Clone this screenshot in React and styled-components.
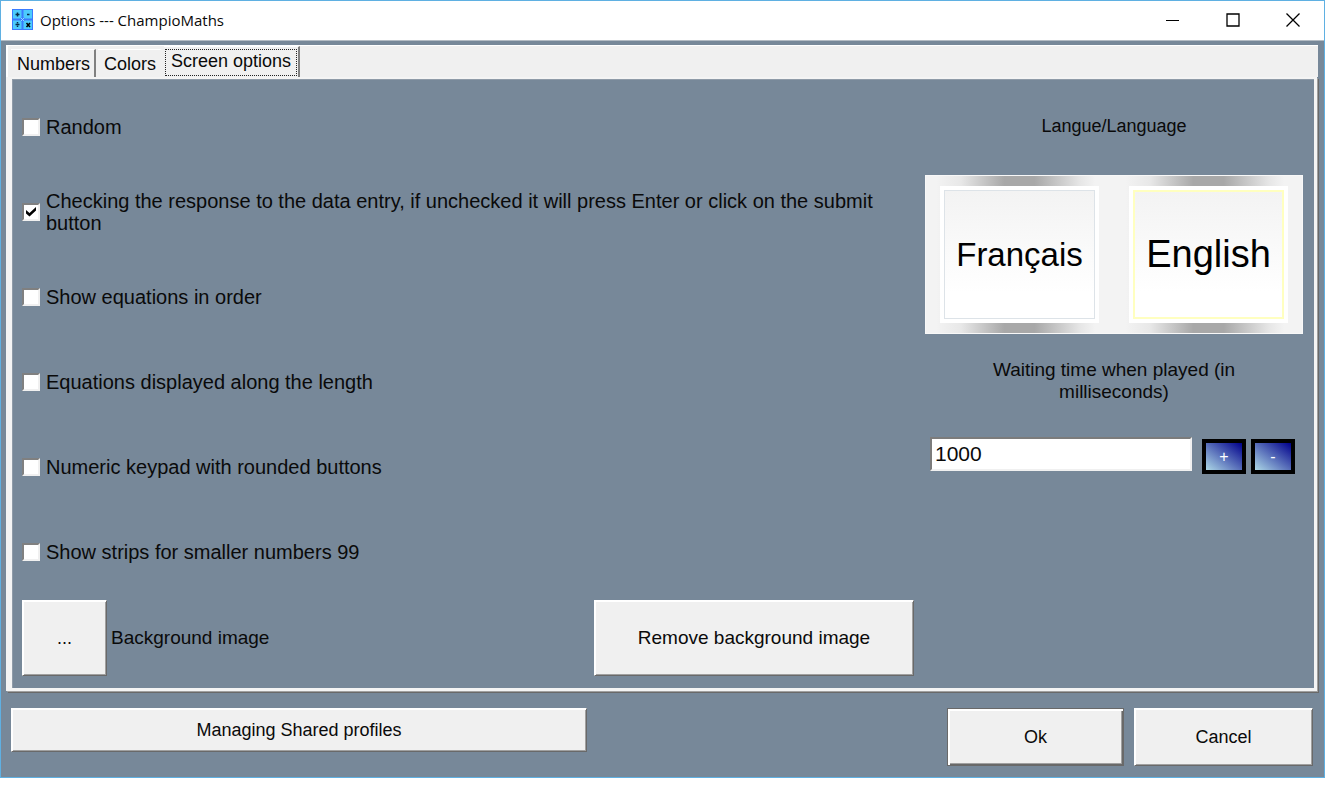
import React, { useState } from 'react'
import styled, { createGlobalStyle } from 'styled-components'

const slate = '#778899'
const face = '#f0f0f0'

const GlobalStyle = createGlobalStyle`
  * { box-sizing: border-box; }

  body {
    margin: 0;
    background: #fff;
    color: #0a0a0a;
    font-family: "Liberation Sans", Arial, sans-serif;
    font-size: 18px;
  }

  button, input { font: inherit; color: inherit; }
`

const Window = styled.div`
  background: ${slate};
  border: 1px solid #5fb0e2;
`

const TitleBar = styled.header`
  display: flex;
  align-items: center;
  height: 40px;
  padding: 0 1px 2px 11px;
  background: #fff;
  border-bottom: 1px solid #b4bcc4;
`

const Title = styled.h1`
  flex: 1;
  margin: 0 0 0 7px;
  font: 400 15px "Open Sans", "Noto Sans", sans-serif;
`

const WindowButton = styled.button`
  display: grid;
  place-items: center;
  width: 60px;
  height: 36px;
  padding: 0;
  border: 0;
  background: none;
`

const Notebook = styled.main`
  margin: 4px 6px 0 5px;
`

const TabStrip = styled.div`
  display: flex;
  align-items: flex-end;
  gap: 2px;
  height: 32px;
  padding-left: 3px;
  background: ${face};
  border-top: 1px solid #fff;
  border-left: 2px solid #fff;
`

const Tab = styled.button`
  height: ${p => (p['aria-selected'] ? 31 : 28)}px;
  padding: ${p => (p['aria-selected'] ? '0 1px' : '0 4px 0 6px')};
  border: 0;
  border-top: 1px solid #fff;
  border-right: 2px solid ${p => (p.$edge ? '#808080' : face)};
  background: ${face};
  line-height: 26px;
  white-space: nowrap;
`

const Focus = styled.span`
  display: block;
  height: 27px;
  padding: 0 5px;
  border: 1px dotted #222;
  line-height: 23px;
`

const Panel = styled.section`
  display: grid;
  grid-template-columns: minmax(0, 1fr) 378px;
  gap: 11px;
  margin-right: 1px;
  padding: 5px 11px 12px 10px;
  border: solid #f4f4f4;
  border-width: 2px 3px 3px 6px;
  box-shadow: inset 1px 1px 0 #8f9ba8, 1px 1px 0 #a0a0a0, 2px 2px 0 #696969;
`

const Option = styled.label`
  display: flex;
  align-items: center;
  gap: 6px;
  min-height: 85px;
  font-size: 20px;
  line-height: 22px;
`

const Box = styled.span`
  display: grid;
  flex: none;

  > * { grid-area: 1 / 1; place-self: center; }
  svg { pointer-events: none; }
  input:not(:checked) + svg { visibility: hidden; }
`

const Check = styled.input`
  appearance: none;
  width: 18px;
  height: 18px;
  margin: 0;
  border: 2px solid;
  border-color: #808080 #f0f0f0 #f0f0f0 #808080;
  background: #fff;
`

const ImageRow = styled.div`
  display: flex;
  align-items: center;
  gap: 4px;
  margin-top: 6px;

  > label { font-size: 19px; }
  > :last-child { margin-left: auto; font-size: 19px; }
`

const PushButton = styled.button`
  width: ${p => p.$width};
  height: ${p => p.$height}px;
  padding: 0;
  border: 1px solid;
  border-color: ${p => (p.$default ? '#696969' : '#fff #696969 #696969 #fff')};
  background: ${face};
  box-shadow: ${p => (p.$default
    ? 'inset 2px 2px 0 #fff, inset -1px -1px 0 #696969, inset -2px -2px 0 #a0a0a0'
    : 'inset 1px 1px 0 #fff, inset -1px -1px 0 #a0a0a0')};
`

const Side = styled.div`
  display: flex;
  flex-direction: column;
`

const Caption = styled.div`
  display: flex;
  align-items: center;
  justify-content: center;
  height: 85px;
`

const Languages = styled.div`
  display: grid;
  grid-template-columns: 1fr 1fr;
  margin-top: 6px;
  outline: 1px solid #f8f8f8;
  outline-offset: -1px;
`

const LanguageCell = styled.div`
  padding: 11px 15px;
  background: linear-gradient(
    90deg,
    #f3f3f3 6%,
    #e8e8e8 19%,
    #a8a8a8 42%,
    #a8a8a8 58%,
    #e6e6e6 82%,
    #f3f3f3 90%
  );
`

const LanguageButton = styled.button`
  display: block;
  width: 100%;
  height: 137px;
  padding: 4px;
  border: 0;
  background: #fff;
  color: #000;
  font-size: ${p => (p['aria-pressed'] ? 38 : 33)}px;

  span {
    display: grid;
    place-items: center;
    height: 100%;
    border: ${p => (p['aria-pressed'] ? '2px solid #ffffc0' : '1px solid #dde3e8')};
    background: linear-gradient(#f3f3f3, #fff 80%);
  }
`

const DelayLabel = styled.label`
  width: 260px;
  margin: 25px auto 0;
  font-size: 19px;
  line-height: 22px;
  text-align: center;
`

const DelayRow = styled.div`
  display: flex;
  align-items: flex-end;
  gap: 5px;
  margin-top: 34px;
  padding: 0 8px 0 5px;
`

const DelayInput = styled.input`
  flex: 1;
  min-width: 0;
  height: 34px;
  margin: 0 5px 3px 0;
  padding: 0 3px;
  border: 2px solid;
  border-color: #7c7c7c #f0f0f0 #f0f0f0 #7c7c7c;
  background: #fff;
  font-size: 21px;
`

const StepButton = styled.button`
  width: 44px;
  height: 35px;
  padding: 0;
  border: 4px solid #000;
  background: linear-gradient(to top right, #add8e6, #00008b);
  color: #fff;
  font-size: 16px;
`

const Footer = styled.footer`
  display: flex;
  align-items: flex-start;
  gap: 10px;
  padding: 17px 11px 11px 10px;

  > :first-child { margin-right: auto; }
`

const options = [
  'Random',
  'Checking the response to the data entry, if unchecked it will press Enter or click on the submit button',
  'Show equations in order',
  'Equations displayed along the length',
  'Numeric keypad with rounded buttons',
  'Show strips for smaller numbers 99',
]

const tabs = ['Numbers', 'Colors', 'Screen options']

const Logo = () => (
  <svg width="21" height="21" viewBox="0 0 21 21" aria-hidden="true">
    <rect width="21" height="21" fill="#3a7bff" />
    <path fill="#4ccbfc" d="M1 1h8.500v8.500H1zM11.500 1H20v8.500h-8.500zM1 11.500h8.500V20H1zM11.500 11.500H20V20h-8.500z" />
    <path d="M10.500 7.500l3 3-3 3-3-3z" fill="#3a7bff" />
    <path d="M9 9l3 3M12 9l-3 3" stroke="#8fdcff" />
    <path d="M3.500 5.500h4M5.500 3.500v4M15 5.500h2.500M3.500 15.500h4" stroke="#062c4a" strokeWidth="1.500" />
    <path d="M5.500 13v1.500M5.500 16.500V18" stroke="#062c4a" strokeWidth="1.500" />
    <path d="M14.500 14l3.500 4M18 14l-3.500 4" stroke="#000" strokeWidth="1.500" />
  </svg>
)

const Tick = () => (
  <svg width="18" height="18" viewBox="0 0 18 18" aria-hidden="true">
    <path d="M4 7l3.500 3L14 4v3.500l-6.500 6L4 10.500z" fill="#000" />
  </svg>
)

export default function App() {
  const [tab, setTab] = useState('Screen options')
  const [checked, setChecked] = useState([1])
  const [language, setLanguage] = useState('English')
  const [delay, setDelay] = useState(1000)

  const toggle = i => setChecked(
    checked.includes(i) ? checked.filter(n => n !== i) : [...checked, i]
  )

  return (
    <React.Fragment>
      <GlobalStyle />
      <Window>
        <TitleBar>
          <Logo />
          <Title>Options --- ChampioMaths</Title>
          <WindowButton aria-label="Minimize">
            <svg width="14" height="14" stroke="#000"><path d="M0 7.500h13" /></svg>
          </WindowButton>
          <WindowButton aria-label="Maximize">
            <svg width="14" height="14" stroke="#000" fill="none">
              <path d="M1 1h12v12H1z" strokeWidth="1.300" />
            </svg>
          </WindowButton>
          <WindowButton aria-label="Close">
            <svg width="14" height="14" stroke="#000">
              <path d="M.5.5l13 13M13.500.5l-13 13" strokeWidth="1.300" />
            </svg>
          </WindowButton>
        </TitleBar>

        <Notebook>
          <TabStrip role="tablist">
            {tabs.map((name, i) => (
              <Tab
                key={name}
                role="tab"
                aria-selected={tab === name}
                $edge={i !== 1}
                onClick={() => setTab(name)}
              >
                {tab === name ? <Focus>{name}</Focus> : name}
              </Tab>
            ))}
          </TabStrip>

          <Panel role="tabpanel">
            <div>
              {options.map((text, i) => (
                <Option key={text}>
                  <Box>
                    <Check
                      type="checkbox"
                      checked={checked.includes(i)}
                      onChange={() => toggle(i)}
                    />
                    <Tick />
                  </Box>
                  <span>{text}</span>
                </Option>
              ))}
              <ImageRow>
                <PushButton id="browse" $width="85px" $height={76}>...</PushButton>
                <label htmlFor="browse">Background image</label>
                <PushButton $width="320px" $height={76}>Remove background image</PushButton>
              </ImageRow>
            </div>

            <Side>
              <Caption>Langue/Language</Caption>
              <Languages>
                {['Français', 'English'].map(name => (
                  <LanguageCell key={name}>
                    <LanguageButton
                      aria-pressed={language === name}
                      onClick={() => setLanguage(name)}
                    >
                      <span>{name}</span>
                    </LanguageButton>
                  </LanguageCell>
                ))}
              </Languages>
              <DelayLabel htmlFor="delay">
                Waiting time when played (in milliseconds)
              </DelayLabel>
              <DelayRow>
                <DelayInput
                  id="delay"
                  value={delay}
                  onChange={e => setDelay(Number(e.target.value) || 0)}
                />
                <StepButton onClick={() => setDelay(delay + 100)}>+</StepButton>
                <StepButton onClick={() => setDelay(delay - 100)}>-</StepButton>
              </DelayRow>
            </Side>
          </Panel>
        </Notebook>

        <Footer>
          <PushButton $width="576px" $height={44}>Managing Shared profiles</PushButton>
          <PushButton $width="177px" $height={58} $default>Ok</PushButton>
          <PushButton $width="179px" $height={58}>Cancel</PushButton>
        </Footer>
      </Window>
    </React.Fragment>
  )
}
